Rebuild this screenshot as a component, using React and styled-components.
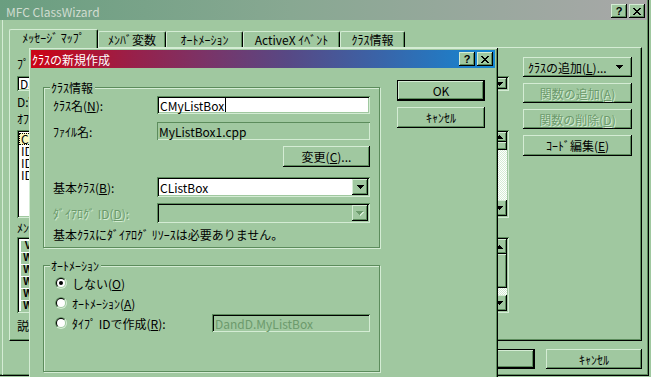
import React from "react"
import styled, { createGlobalStyle, css } from "styled-components"

const C = {
  face: "#a0c8a0",
  light: "#d4ecd4",
  shadow: "#5c8c5c",
  dark: "#000000",
  white: "#ffffff",
  grayText: "#6c9a6c",
  selected: "#f8f8c0",
}

const GlobalStyle = createGlobalStyle`
  *, *::before, *::after { box-sizing: border-box; }
  html, body {
    margin: 0;
    padding: 0;
    background: ${C.face};
  }
  body {
    font-family: "MS UI Gothic", "Noto Sans CJK JP", sans-serif;
    font-size: 12px;
    line-height: 13px;
    color: #000;
    overflow: hidden;
  }
`

const raised = css`
  box-shadow: inset -1px -1px 0 ${C.dark}, inset 1px 1px 0 ${C.light}, inset -2px -2px 0 ${C.shadow};
`
const defaultRaised = css`
  box-shadow: inset 0 0 0 1px ${C.dark}, inset -2px -2px 0 ${C.dark}, inset 2px 2px 0 ${C.light},
    inset -3px -3px 0 ${C.shadow};
`
const sunken = css`
  box-shadow: inset 1px 1px 0 ${C.shadow}, inset -1px -1px 0 ${C.light}, inset 2px 2px 0 ${C.dark},
    inset -2px -2px 0 ${C.face};
`
const etched = css`
  color: ${C.grayText};
  text-shadow: 1px 1px 0 ${C.light};
`

const Desktop = styled.div`
  position: relative;
  width: 651px;
  height: 377px;
  overflow: hidden;
  background: ${C.face};
`

/* ---------- window chrome ---------- */

const Frame = styled.div`
  width: 649px;
  height: 376px;
  border-right: 1px solid ${C.dark};
  border-bottom: 1px solid ${C.dark};
  box-shadow: inset -1px -1px 0 ${C.shadow};
  display: flex;
  flex-direction: column;
`

const TitleBar = styled.div`
  display: flex;
  align-items: center;
  flex: none;
  height: ${({ $active }) => ($active ? 18 : 20)}px;
  padding: ${({ $active }) => ($active ? "0 2px 0 1px" : "2px 2px 0 6px")};
  margin-right: ${({ $active }) => ($active ? 0 : 1)}px;
  background: ${({ $active }) =>
    $active
      ? "linear-gradient(to right, #cc0414 0%, #98204a 22%, #7a3468 38%, #584884 55%, #3a64a8 75%, #1488d4 100%)"
      : "linear-gradient(to right, #6a9e80 0%, #88a892 45%, #a8a8a8 100%)"};
  color: ${({ $active }) => ($active ? C.white : "#d0dcd0")};
`

const TitleText = styled.span`
  flex: 1;
  white-space: nowrap;
  overflow: hidden;
`

const TitleButton = styled.span`
  width: 16px;
  height: 14px;
  flex: none;
  margin-left: ${({ $gap }) => $gap || 0}px;
  display: flex;
  align-items: center;
  justify-content: center;
  background: ${C.face};
  color: #000;
  font: bold 11px/11px "Liberation Sans", sans-serif;
  ${raised}
`

const CloseGlyph = () => (
  <svg width="8" height="7" viewBox="0 0 8 7" shapeRendering="crispEdges">
    <path
      fill="#000"
      d="M0 0h2v1H0z M6 0h2v1H6z M1 1h2v1H1z M5 1h2v1H5z M2 2h4v1H2z M3 3h2v1H3z M2 4h4v1H2z M1 5h2v1H1z M5 5h2v1H5z M0 6h2v1H0z M6 6h2v1H6z"
    />
  </svg>
)

const Caption = ({ title, active }) => (
  <TitleBar $active={active}>
    <TitleText>{title}</TitleText>
    <TitleButton>?</TitleButton>
    <TitleButton $gap={2}>
      <CloseGlyph />
    </TitleButton>
  </TitleBar>
)

/* ---------- common controls ---------- */

const U = styled.span`
  text-decoration: underline;
  text-underline-offset: 1px;
`

const PushButton = styled.div`
  width: ${({ $w }) => $w}px;
  height: ${({ $h }) => $h || 20}px;
  flex: none;
  display: flex;
  align-items: center;
  justify-content: ${({ $split }) => ($split ? "space-between" : "center")};
  padding: ${({ $split }) => ($split ? "0 9px 0 5px" : "0")};
  background: ${C.face};
  white-space: nowrap;
  ${({ $default }) => ($default ? defaultRaised : raised)}
  ${({ $disabled }) => $disabled && etched}
`

const Arrow = ({ up, color = "#000" }) => (
  <svg width="7" height="4" viewBox="0 0 7 4" shapeRendering="crispEdges">
    <path fill={color} d={up ? "M3 0h1v1h1v1h1v1h1v1H0V3h1V2h1V1h1z" : "M0 0h7v1H6v1H5v1H4v1H3V3H2V2H1V1H0z"} />
  </svg>
)

const ComboBox = styled.div`
  width: ${({ $w }) => $w}px;
  height: ${({ $h }) => $h}px;
  flex: none;
  display: flex;
  padding: 2px;
  background: ${({ $disabled }) => ($disabled ? C.face : C.white)};
  ${sunken}
`

const ComboText = styled.span`
  flex: 1;
  padding-left: 1px;
  display: flex;
  align-items: center;
  white-space: nowrap;
  overflow: hidden;
`

const DropButton = styled.span`
  width: 16px;
  flex: none;
  display: flex;
  align-items: center;
  justify-content: center;
  background: ${C.face};
  ${raised}
`

const Combo = ({ w, h = 20, value, disabled }) => (
  <ComboBox $w={w} $h={h} $disabled={disabled}>
    <ComboText>{value}</ComboText>
    <DropButton>
      {disabled ? (
        <svg width="8" height="5" viewBox="0 0 8 5" shapeRendering="crispEdges">
          <path fill={C.light} d="M1 1h7v1H7v1H6v1H5v1H4V4H3V3H2V2H1z" />
          <path fill={C.grayText} d="M0 0h7v1H6v1H5v1H4v1H3V3H2V2H1V1H0z" />
        </svg>
      ) : (
        <Arrow />
      )}
    </DropButton>
  </ComboBox>
)

const EditBox = styled.div`
  width: ${({ $w }) => $w}px;
  height: ${({ $h }) => $h || 18}px;
  flex: none;
  display: flex;
  align-items: center;
  white-space: nowrap;
  overflow: hidden;
  padding-left: ${({ $flat }) => ($flat ? 2 : 3)}px;
  background: ${({ $readOnly }) => ($readOnly ? C.face : C.white)};
  color: ${({ $readOnly }) => ($readOnly ? "inherit" : "#000")};
  ${({ $flat }) =>
    $flat
      ? css`
          box-shadow: inset 1px 1px 0 ${C.shadow}, inset -1px -1px 0 ${C.light};
        `
      : sunken}
  ${({ $disabled }) =>
    $disabled &&
    css`
      color: ${C.grayText};
    `}
`

const Caret = styled.span`
  display: inline-block;
  width: 1px;
  height: 14px;
  margin-left: 1px;
  background: #000;
`

const RadioDot = ({ checked }) => {
  const half = (r) => {
    const k = r * Math.SQRT1_2
    return `M${6 - k} ${6 + k}A${r} ${r} 0 0 1 ${6 + k} ${6 - k}Z`
  }
  return (
    <svg width="12" height="12" viewBox="0 0 12 12">
      <circle cx="6" cy="6" r="6" fill={C.light} />
      <path d={half(6)} fill={C.shadow} />
      <circle cx="6" cy="6" r="5" fill={C.face} />
      <path d={half(5)} fill="#000" />
      <circle cx="6" cy="6" r="4" fill="#fff" />
      {checked && <circle cx="6" cy="6" r="2" fill="#000" />}
    </svg>
  )
}

/* ---------- main ClassWizard window ---------- */

const WindowBody = styled.div`
  flex: 1;
  display: flex;
  flex-direction: column;
  margin-left: 2px;
  border-left: 1px solid ${C.light};
  padding: 0 6px 0 6px;
`

const TabStrip = styled.div`
  display: flex;
  align-items: flex-end;
  height: 18px;
  margin-top: 9px;
`

const Tab = styled.div`
  width: ${({ $w }) => $w}px;
  height: ${({ $active }) => ($active ? 19 : 16)}px;
  margin-bottom: ${({ $active }) => ($active ? -1 : 0)}px;
  position: relative;
  z-index: ${({ $active }) => ($active ? 1 : 0)};
  display: flex;
  align-items: center;
  justify-content: center;
  padding-bottom: ${({ $active }) => ($active ? 3 : 0)}px;
  white-space: nowrap;
  background: ${C.face};
  border-top: 1px solid ${C.light};
  border-left: 1px solid ${C.light};
  border-right: 1px solid ${C.dark};
  border-radius: 2px 2px 0 0;
  box-shadow: inset -1px 0 0 ${C.shadow};
`

const TabPanel = styled.div`
  height: 294px;
  flex: none;
  display: grid;
  grid-template-columns: 492px 109px;
  column-gap: 14px;
  align-items: start;
  padding: 0 7px;
  border-top: 1px solid ${C.light};
  border-left: 1px solid ${C.light};
  border-right: 1px solid ${C.dark};
  border-bottom: 1px solid ${C.dark};
  box-shadow: inset -1px -1px 0 ${C.shadow};
`

const Pane = styled.div`
  display: flex;
  flex-direction: column;
`

const TwoCol = styled.div`
  display: grid;
  grid-template-columns: 236px 236px;
  column-gap: 20px;
  margin-top: ${({ $mt }) => $mt || 0}px;
`

const Label = styled.div`
  height: 12px;
  line-height: 12px;
  white-space: nowrap;
  overflow: hidden;
  margin-top: ${({ $mt }) => $mt || 0}px;
`

const ListBox = styled.div`
  height: ${({ $h }) => $h}px;
  display: flex;
  padding: 2px;
  background: ${C.white};
  overflow: hidden;
  margin-top: ${({ $mt }) => $mt || 0}px;
  ${sunken}
`

const ListItems = styled.div`
  flex: 1;
  min-width: 0;
  padding-top: 1px;
`

const ListItem = styled.div`
  height: 12px;
  line-height: 12px;
  padding-left: 2px;
  display: flex;
  align-items: center;
  gap: 4px;
  white-space: nowrap;
  background: ${({ $selected }) => ($selected ? C.selected : "transparent")};
  outline: ${({ $selected }) => ($selected ? "1px dotted #000" : "none")};
  outline-offset: -1px;
`

const ItemIcon = styled.span`
  width: 14px;
  height: 11px;
  flex: none;
  display: flex;
  align-items: center;
  justify-content: center;
  background: ${C.face};
  font: bold 10px/10px "Liberation Sans", sans-serif;
`

const ScrollBar = styled.div`
  width: 16px;
  flex: none;
  display: flex;
  flex-direction: column;
`

const ScrollArrow = styled.div`
  height: ${({ $h }) => $h || 16}px;
  flex: none;
  display: flex;
  align-items: center;
  justify-content: center;
  background: ${C.face};
  ${raised}
`

const ScrollThumb = styled.div`
  height: ${({ $h }) => $h}px;
  flex: none;
  background: ${C.face};
  ${raised}
`

const ScrollTrack = styled.div`
  flex: 1;
  background: repeating-conic-gradient(${C.light} 0 25%, ${C.white} 0 50%) 0 0 / 2px 2px;
`

const Scroller = ({ thumb, up = 16 }) => (
  <ScrollBar>
    <ScrollArrow $h={up}>
      <Arrow up />
    </ScrollArrow>
    <ScrollThumb $h={thumb} />
    <ScrollTrack />
    <ScrollArrow>
      <Arrow />
    </ScrollArrow>
  </ScrollBar>
)

const ButtonColumn = styled.div`
  display: flex;
  flex-direction: column;
  gap: ${({ $gap }) => $gap}px;
  margin-top: ${({ $mt }) => $mt || 0}px;
`

const BottomRow = styled.div`
  display: flex;
  justify-content: flex-end;
  gap: 11px;
  margin-top: 8px;
`

const tabs = [
  { label: "ﾒｯｾｰｼﾞ ﾏｯﾌﾟ", w: 89, active: true },
  { label: "ﾒﾝﾊﾞ変数", w: 68 },
  { label: "ｵｰﾄﾒｰｼｮﾝ", w: 77 },
  { label: "ActiveX ｲﾍﾞﾝﾄ", w: 97 },
  { label: "ｸﾗｽ情報", w: 65 },
]

const objectIds = ["CDandDDlg", "IDC_LIST1", "IDCANCEL", "IDOK"]
const messages = ["DoDataExchange", "OnCmdMsg", "OnCommand", "OnNotify", "PreTranslateMessage"]
const members = [
  { icon: "V", name: "DoDataExchange" },
  { icon: "W", name: "OnInitDialog   ON_WM_INITDIALOG" },
  { icon: "W", name: "OnPaint   ON_WM_PAINT" },
  { icon: "W", name: "OnQueryDragIcon   ON_WM_QUERYDRAGICON" },
  { icon: "W", name: "OnSysCommand   ON_WM_SYSCOMMAND" },
  { icon: "W", name: "OnDestroy   ON_WM_DESTROY" },
]

const ClassWizard = () => (
  <Frame>
    <Caption title="MFC ClassWizard" />
    <WindowBody>
      <TabStrip>
        {tabs.map((t) => (
          <Tab key={t.label} $w={t.w} $active={t.active}>
            {t.label}
          </Tab>
        ))}
      </TabStrip>
      <TabPanel>
        <Pane>
          <TwoCol $mt={10}>
            <Label>
              ﾌﾟﾛｼﾞｪｸﾄ(<U>P</U>):
            </Label>
            <Label>
              ｸﾗｽ名(<U>N</U>):
            </Label>
          </TwoCol>
          <TwoCol $mt={6}>
            <Combo w={236} h={15} value="DandD.dsp" />
            <Combo w={236} h={15} value="CDandDDlg" />
          </TwoCol>
          <Label $mt={5}>D:\Projects\DandD\DandDDlg.h, D:\Projects\DandD\DandDDlg.cpp</Label>
          <TwoCol $mt={5}>
            <Label>
              ｵﾌﾞｼﾞｪｸﾄ ID(<U>B</U>):
            </Label>
            <Label>
              ﾒｯｾｰｼﾞ(<U>S</U>):
            </Label>
          </TwoCol>
          <TwoCol $mt={5}>
            <ListBox $h={88}>
              <ListItems>
                {objectIds.map((id, i) => (
                  <ListItem key={id} $selected={i === 0}>
                    {id}
                  </ListItem>
                ))}
              </ListItems>
            </ListBox>
            <ListBox $h={88}>
              <ListItems>
                {messages.map((m) => (
                  <ListItem key={m}>{m}</ListItem>
                ))}
              </ListItems>
              <Scroller thumb={8} up={10} />
            </ListBox>
          </TwoCol>
          <Label $mt={4}>
            ﾒﾝﾊﾞ関数(<U>M</U>):
          </Label>
          <ListBox $h={76} $mt={3}>
            <ListItems>
              {members.map((m) => (
                <ListItem key={m.name}>
                  <ItemIcon>{m.icon}</ItemIcon>
                  {m.name}
                </ListItem>
              ))}
            </ListItems>
            <Scroller thumb={34} up={15} />
          </ListBox>
          <Label $mt={7}>説明:</Label>
        </Pane>
        <ButtonColumn $gap={6} $mt={9}>
          <PushButton $w={109} $split>
            <span>
              ｸﾗｽの追加(<U>L</U>)...
            </span>
            <Arrow />
          </PushButton>
          <PushButton $w={109} $disabled>
            関数の追加(<U>A</U>)
          </PushButton>
          <PushButton $w={109} $disabled>
            関数の削除(<U>D</U>)
          </PushButton>
          <PushButton $w={109} $h={21}>
            ｺｰﾄﾞ編集(<U>E</U>)
          </PushButton>
        </ButtonColumn>
      </TabPanel>
      <BottomRow>
        <PushButton $w={96} $default>
          OK
        </PushButton>
        <PushButton $w={96}>ｷｬﾝｾﾙ</PushButton>
      </BottomRow>
    </WindowBody>
  </Frame>
)

/* ---------- new class dialog ---------- */

const Dialog = styled.div`
  position: absolute;
  left: 29px;
  top: 48px;
  width: 469px;
  height: 360px;
  padding: 2px 3px 0 2px;
  background: ${C.face};
  box-shadow: inset -1px -1px 0 ${C.dark}, inset 1px 1px 0 ${C.light}, inset -2px -2px 0 ${C.shadow};
`

const DialogBody = styled.div`
  display: flex;
  gap: 17px;
  padding: 12px 0 0 12px;
`

const GroupColumn = styled.div`
  display: flex;
  flex-direction: column;
`

const GroupBox = styled.div`
  position: relative;
  width: 337px;
  height: ${({ $h }) => $h}px;
  margin-top: ${({ $mt }) => $mt}px;
  display: flex;
  flex-direction: column;
  padding: ${({ $pad }) => $pad};
  border: 1px solid ${C.shadow};
  box-shadow: inset 1px 1px 0 ${C.light}, 1px 1px 0 ${C.light};
`

const Legend = styled.span`
  position: absolute;
  top: -7px;
  left: 6px;
  padding: 0 2px 0 1px;
  line-height: 13px;
  background: ${C.face};
  white-space: nowrap;
`

const FormRow = styled.div`
  display: flex;
  align-items: center;
  justify-content: ${({ $end }) => ($end ? "flex-end" : "flex-start")};
  height: ${({ $h }) => $h}px;
  margin-top: ${({ $mt }) => $mt}px;
  white-space: nowrap;
`

const FieldLabel = styled.span`
  width: 104px;
  flex: none;
  ${({ $disabled }) => $disabled && etched}
`

const RadioRow = styled.label`
  display: flex;
  align-items: center;
  gap: 5px;
  height: 20px;
  margin-top: ${({ $mt }) => $mt || 0}px;
  white-space: nowrap;
`

const RadioText = styled.span`
  flex: 1;
`

const NewClassDialog = () => (
  <Dialog>
    <Caption title="ｸﾗｽの新規作成" active />
    <DialogBody>
      <GroupColumn>
        <GroupBox $h={161} $mt={7} $pad="0 9px">
          <Legend>ｸﾗｽ情報</Legend>
          <FormRow $h={18} $mt={8}>
            <FieldLabel>
              ｸﾗｽ名(<U>N</U>):
            </FieldLabel>
            <EditBox $w={213}>
              CMyListBox
              <Caret />
            </EditBox>
          </FormRow>
          <FormRow $h={18} $mt={8}>
            <FieldLabel>ﾌｧｲﾙ名:</FieldLabel>
            <EditBox $w={213} $readOnly $flat>
              MyListBox1.cpp
            </EditBox>
          </FormRow>
          <FormRow $h={21} $mt={6} $end>
            <PushButton $w={87} $h={21}>
              変更(<U>C</U>)...
            </PushButton>
          </FormRow>
          <FormRow $h={20} $mt={10}>
            <FieldLabel>
              基本ｸﾗｽ(<U>B</U>):
            </FieldLabel>
            <Combo w={213} value="CListBox" />
          </FormRow>
          <FormRow $h={20} $mt={6}>
            <FieldLabel $disabled>
              ﾀﾞｲｱﾛｸﾞ ID(<U>D</U>):
            </FieldLabel>
            <Combo w={213} value="" disabled />
          </FormRow>
          <FormRow $h={13} $mt={5}>
            基本ｸﾗｽにﾀﾞｲｱﾛｸﾞ ﾘｿｰｽは必要ありません。
          </FormRow>
        </GroupBox>
        <GroupBox $h={107} $mt={17} $pad="0 9px 0 11px">
          <Legend>ｵｰﾄﾒｰｼｮﾝ</Legend>
          <RadioRow $mt={7}>
            <RadioDot checked />
            <RadioText>
              しない(<U>O</U>)
            </RadioText>
          </RadioRow>
          <RadioRow>
            <RadioDot />
            <RadioText>
              ｵｰﾄﾒｰｼｮﾝ(<U>A</U>)
            </RadioText>
          </RadioRow>
          <RadioRow>
            <RadioDot />
            <RadioText>
              ﾀｲﾌﾟ IDで作成(<U>R</U>):
            </RadioText>
            <EditBox $w={158} $readOnly $disabled>
              DandD.MyListBox
            </EditBox>
          </RadioRow>
        </GroupBox>
      </GroupColumn>
      <ButtonColumn $gap={6}>
        <PushButton $w={88} $h={21} $default>
          OK
        </PushButton>
        <PushButton $w={88} $h={21}>
          ｷｬﾝｾﾙ
        </PushButton>
      </ButtonColumn>
    </DialogBody>
  </Dialog>
)

const App = () => (
  <>
    <GlobalStyle />
    <Desktop>
      <ClassWizard />
      <NewClassDialog />
    </Desktop>
  </>
)

export default App
